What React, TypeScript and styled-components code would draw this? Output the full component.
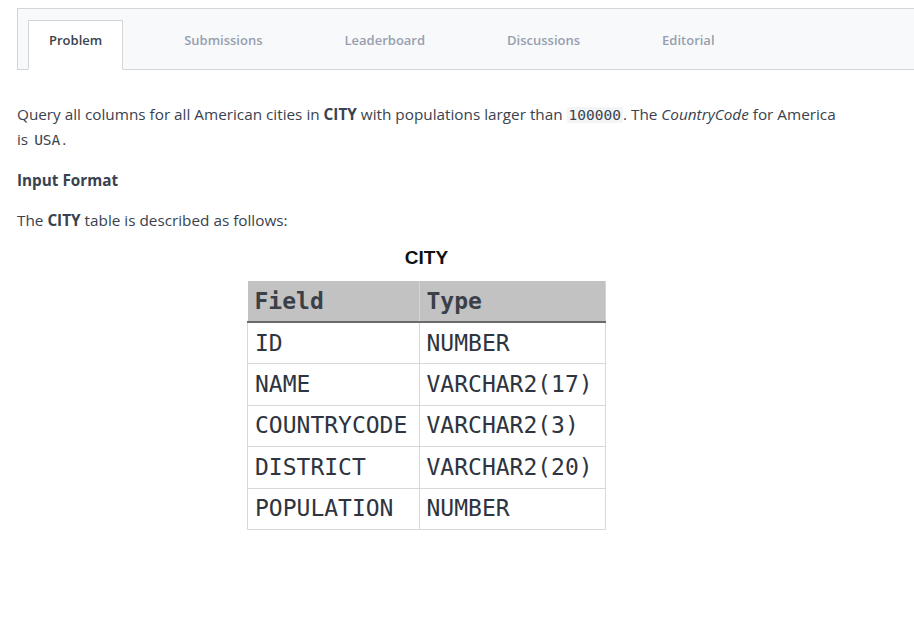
import React from "react";
import styled, { createGlobalStyle } from "styled-components";

const Global = createGlobalStyle`
  html, body { margin: 0; padding: 0; background: #ffffff; }
  body { font-family: "Open Sans", "Noto Sans", sans-serif; color: #39424e; }
`;

const Page = styled.div`
  padding: 8px 0 0 17px;
  overflow: hidden;
`;

const TabBar = styled.nav`
  display: flex;
  align-items: flex-end;
  gap: 40px;
  height: 60px;
  padding-left: 10px;
  background: #f8f9fb;
  border-top: 1px solid #d3d5d9;
  border-left: 1px solid #d3d5d9;
  border-bottom: 1px solid #d3d5d9;
  margin-right: -4px;
`;

const Tab = styled.div<{ $active?: boolean }>`
  height: 50px;
  padding: 10px 20px 0;
  display: flex;
  align-items: flex-start;
  font-size: 13px;
  line-height: 18px;
  font-weight: 600;
  margin-bottom: -1px;
  box-sizing: border-box;
  color: ${(p) => (p.$active ? "#39424e" : "#979faf")};
  background: ${(p) => (p.$active ? "#ffffff" : "transparent")};
  border: 1px solid ${(p) => (p.$active ? "#d3d5d9" : "transparent")};
  border-bottom: 1px solid ${(p) => (p.$active ? "#ffffff" : "transparent")};
`;

const Body = styled.div`
  width: 825px;
  padding-top: 32px;
  font-size: 15.3px;
  line-height: 25px;
`;

const Para = styled.p`
  margin: 0 0 16px;
`;

const Heading = styled.p`
  margin: 0 0 15px;
  font-weight: 700;
`;

const Code = styled.code<{ $bg?: boolean }>`
  font-family: "DejaVu Sans Mono", monospace;
  font-size: 14.5px;
  line-height: 20px;
  padding: 0 2px;
  background: ${(p) => (p.$bg ? "#f3f4f6" : "transparent")};
  border-radius: 2px;
`;

const Figure = styled.figure`
  margin: 0;
  width: 359px;
  margin-left: 230px;
  margin-top: -3px;
  display: flex;
  flex-direction: column;
  align-items: center;
`;

const Caption = styled.figcaption`
  font-family: "Liberation Sans", Arial, sans-serif;
  font-weight: 700;
  font-size: 19px;
  color: #111;
  line-height: 24px;
  margin-bottom: 11px;
`;

const Table = styled.table`
  border-collapse: collapse;
  width: 359px;
  font-family: "DejaVu Sans Mono", monospace;
  font-size: 23px;
  color: #2e3440;
`;

const Th = styled.th<{ $w?: number }>`
  background: #c2c2c2;
  text-align: left;
  font-weight: 700;
  height: 40px;
  padding: 0 7px;
  color: #3a3f48;
  border-right: 1px solid #d4d4d4;
  border-bottom: 2px solid #6b6b6b;
  ${(p) => (p.$w ? `width: ${p.$w}px;` : "")}
`;

const Td = styled.td`
  height: 40.4px;
  padding: 0 7px;
  border: 1px solid #d8d8d8;
  white-space: nowrap;
`;

const rows: [string, string][] = [
  ["ID", "NUMBER"],
  ["NAME", "VARCHAR2(17)"],
  ["COUNTRYCODE", "VARCHAR2(3)"],
  ["DISTRICT", "VARCHAR2(20)"],
  ["POPULATION", "NUMBER"],
];

export default function App() {
  return (
    <Page>
      <Global />
      <TabBar>
        <Tab $active>Problem</Tab>
        <Tab>Submissions</Tab>
        <Tab>Leaderboard</Tab>
        <Tab>Discussions</Tab>
        <Tab>Editorial</Tab>
      </TabBar>
      <Body>
        <Para>
          Query all columns for all American cities in <b>CITY</b> with populations larger than{" "}
          <Code $bg>100000</Code>. The <i>CountryCode</i> for America is <Code>USA</Code>.
        </Para>
        <Heading>Input Format</Heading>
        <Para>
          The <b>CITY</b> table is described as follows:
        </Para>
        <Figure>
          <Caption>CITY</Caption>
          <Table>
            <thead>
              <tr>
                <Th $w={157}>Field</Th>
                <Th>Type</Th>
              </tr>
            </thead>
            <tbody>
              {rows.map(([f, t]) => (
                <tr key={f}>
                  <Td>{f}</Td>
                  <Td>{t}</Td>
                </tr>
              ))}
            </tbody>
          </Table>
        </Figure>
      </Body>
    </Page>
  );
}
